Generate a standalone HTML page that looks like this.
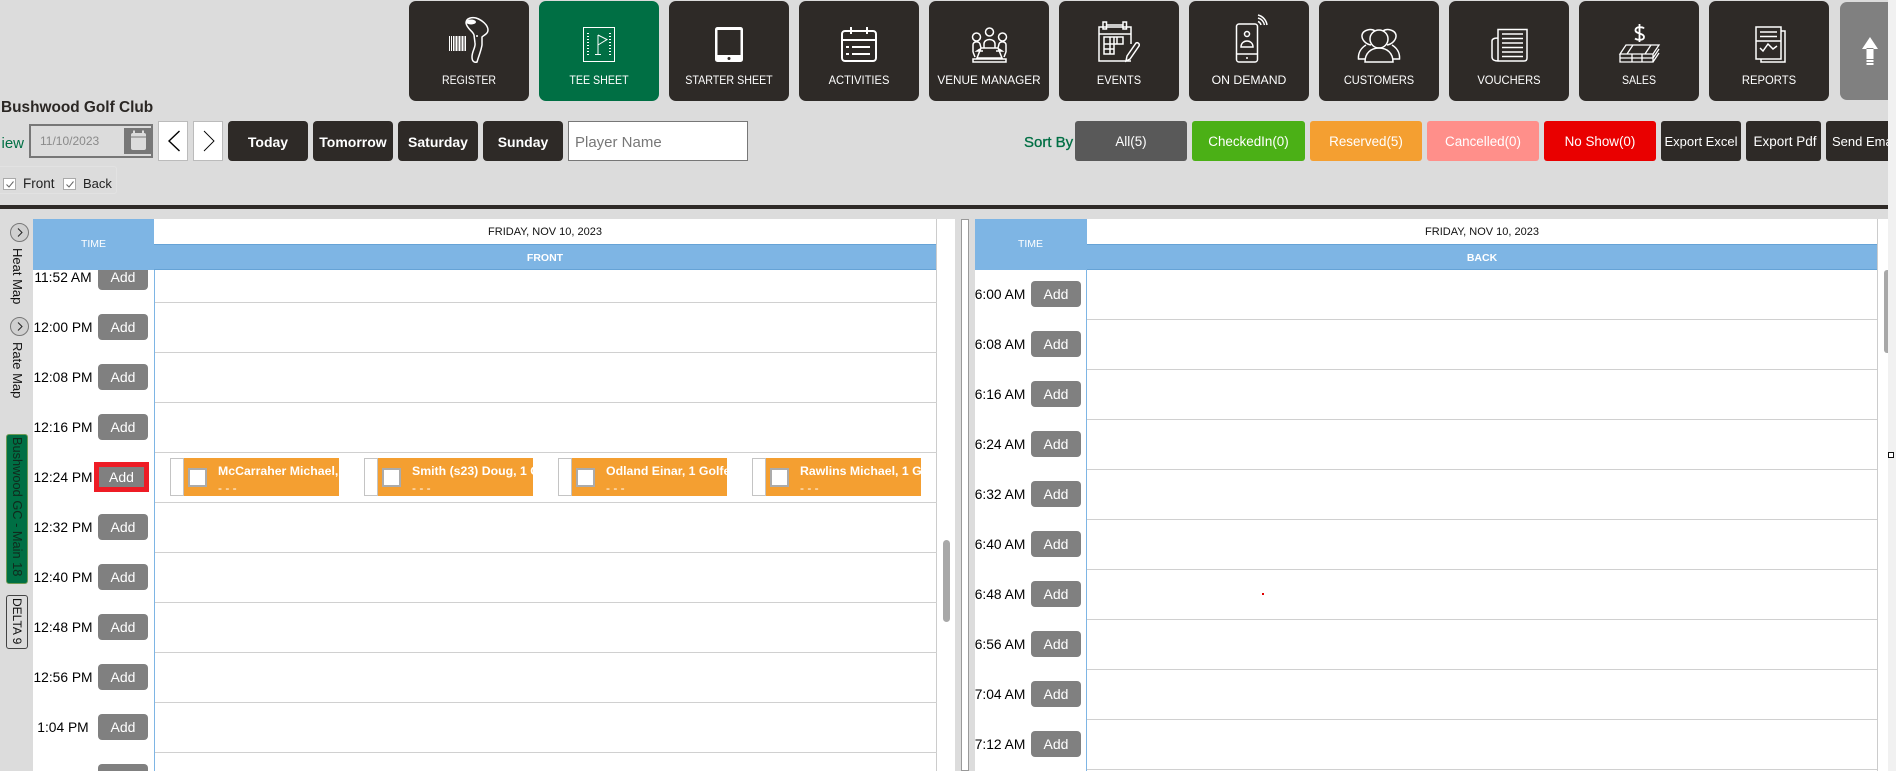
<!DOCTYPE html>
<html><head><meta charset="utf-8"><title>Tee Sheet</title>
<style>
html,body{margin:0;padding:0;width:1896px;height:771px;overflow:hidden;background:#dcdcdc;font-family:"Liberation Sans",sans-serif}
#p{position:absolute;left:0;top:0;width:1896px;height:771px;overflow:hidden}
#p div,#p span,#p svg{position:absolute;box-sizing:border-box}
.nb{top:1px;width:120px;height:100px;background:#2e2a27;border-radius:7px;color:#fff}
.nb svg{left:0;top:0;width:120px;height:100px;fill:none;stroke:#fff;stroke-width:1.5}
.nb span{left:0;width:120px;top:72px;text-align:center;font-size:12px;line-height:15px;white-space:nowrap}
.b{background:#2e2a27;color:#fff;border-radius:4px;top:121px;height:40px;text-align:center;line-height:42px;font-weight:bold;font-size:14px;white-space:nowrap}
.s{top:121px;height:40px;border-radius:3px;color:#fff;text-align:center;line-height:41px;font-size:13.4px;white-space:nowrap;overflow:hidden}
.a{left:98px;width:50px;height:26px;background:#808080;border-radius:4px;color:#fff;font-size:14px;line-height:26px;text-align:center}
.ar{left:1031px}
.t{left:33px;width:60px;text-align:center;font-size:13.8px;line-height:20px;color:#000;white-space:nowrap}
.tr{left:970px;width:60px}
.l{left:155px;width:782px;height:1px;background:#d0d0d0}
.lr{left:1087px;width:790px}
.ap{top:458px;height:38px}
.w{left:0;top:0;width:14px;height:38px;background:#fff;border:1px solid #c4c4c4}
.o{left:14px;top:0;width:155px;height:38px;background:#f49f31;overflow:hidden;color:#fff}
.c{left:4px;top:10px;width:19px;height:19px;background:#fff;border:2px solid #ababab}
.n{left:34px;top:5px;font-size:12.3px;font-weight:bold;line-height:16px;white-space:nowrap}
.d{left:34px;top:23px;font-size:12px;line-height:15px;white-space:nowrap}
.v{writing-mode:vertical-rl;font-size:13px;white-space:nowrap;color:#111}
.bl{background:#7eb5e4;color:#fff;font-size:10.5px;text-align:center}
.dt{font-size:11px;color:#111;text-align:center;line-height:27px;background:#fff}
</style></head><body><div id="p">

<!-- NAV -->
<div class="nb" style="left:409px"><svg viewBox="0 0 120 100"><path d="M57 22C57 17 63 16 67 17C73 19 79 24 79 29C79 33 75 34 73 36L73 44C72 50 70 54 68 61C65 62 63 60 63 56C63 50 67 46 66 42L65 34C64 30 58 28 57 22Z"/><ellipse cx="62" cy="21" rx="5" ry="2.5" fill="#fff" stroke="none"/><circle cx="68" cy="35" r="1" fill="#fff" stroke="none"/><path stroke-width="1" d="M40.5 35V50M42.5 35V50M44.5 35V50M46 35V50M47.5 35V50M49 35V50M50.5 35V50M52 35V50M53.5 35V50M55 35V50M56.5 35V50"/></svg><span style="transform:scaleX(.88)">REGISTER</span></div>
<div class="nb" style="left:539px;background:#006f44"><svg viewBox="0 0 120 100"><rect x="44.5" y="26.5" width="31" height="34" stroke-width="1"/><path stroke-width="2" stroke-dasharray="1 2" d="M49 32V56M71 32V56"/><path stroke-width="1" d="M59 34V53M56 53.500H62M59 34L68 38.500L59 44"/></svg><span style="transform:scaleX(.89)">TEE SHEET</span></div>
<div class="nb" style="left:669px"><svg viewBox="0 0 120 100"><rect x="46" y="26" width="28" height="35" rx="2.5" fill="#fff" stroke="none"/><rect x="48.5" y="29" width="23" height="25" fill="#2e2a27" stroke="none"/><circle cx="60" cy="57.5" r="1.5" fill="#2e2a27" stroke="none"/></svg><span style="transform:scaleX(.89)">STARTER SHEET</span></div>
<div class="nb" style="left:799px"><svg viewBox="0 0 120 100"><rect x="43" y="30" width="34" height="30" rx="3" stroke-width="2"/><path stroke-width="2" d="M43 39H77M52 26V33M68 26V33M53 46H71M53 53H71M47 46H50M47 53H50"/></svg><span style="transform:scaleX(.93)">ACTIVITIES</span></div>
<div class="nb" style="left:929px"><svg viewBox="0 0 120 100" stroke-width="1.2"><circle cx="60.5" cy="31" r="4"/><circle cx="47.5" cy="36" r="4"/><circle cx="73.5" cy="36" r="4"/><path d="M55 43C55 37 66 37 66 43V47H55ZM44 51V44C44 40 50 40 51 43L52 47M77 51V44C77 40 71 40 70 43L69 47M51 48L48 50H54M70 48L73 50H67M52 47H69L73 57H48ZM44 51L46 56M77 51L75 56"/><path stroke-width="1.5" d="M44 61V58H77V61ZM44 61H77"/></svg><span style="transform:scaleX(.98)">VENUE MANAGER</span></div>
<div class="nb" style="left:1059px"><svg viewBox="0 0 120 100" stroke-width="1.3"><path d="M72 60H40V26H72V43M40 33H72"/><rect x="44" y="21" width="3.5" height="7"/><rect x="64" y="21" width="3.5" height="7"/><path d="M47.5 24H64M45 36H64V43H45ZM45 43V53H55V36M51 36V53M45 48H55M58 36V43"/><path d="M68 55L77 42C79 41 81 43 80 45L71 58L67 60Z"/></svg><span style="transform:scaleX(.92)">EVENTS</span></div>
<div class="nb" style="left:1189px"><svg viewBox="0 0 120 100" stroke-width="1.3"><rect x="47.5" y="23" width="21" height="38" rx="2.5"/><path d="M47.5 53H68.500"/><circle cx="58" cy="33" r="2.5"/><path d="M52 46C52 38 64 38 64 46Z" stroke-width="1.5"/><circle cx="58" cy="57" r="1" fill="#fff" stroke="none"/><path d="M69 20.500A5 5 0 0 1 72 24M69 17A9 9 0 0 1 75.500 24M69 14A12 12 0 0 1 78 24"/></svg><span style="transform:scaleX(1.02)">ON DEMAND</span></div>
<div class="nb" style="left:1319px"><svg viewBox="0 0 120 100" stroke-width="1.8"><circle cx="60" cy="38" r="9"/><path d="M52 44C46 43 42.500 38 43 34C44 29 52 27 56 30M68 44C74 43 77.500 38 77 34C76 29 68 27 64 30"/><path d="M46 61C46 52 52 47 60 47C68 47 74 52 74 61Z"/><path d="M46 58H39.500C39 52 42 47 47 44M74 58H80.500C81 52 78 47 73 44"/></svg><span style="transform:scaleX(.92)">CUSTOMERS</span></div>
<div class="nb" style="left:1449px"><svg viewBox="0 0 120 100" stroke-width="1.3"><path d="M49 60H75C77 60 78 59 78 57V28.500H49V60C46 60 43 59 43 56V40C43 38 45 37 49 37"/><path d="M53 33H74M53 37.500H74M53 42H74M53 46.500H74M53 51H74M53 55.500H74"/></svg><span style="transform:scaleX(.93)">VOUCHERS</span></div>
<div class="nb" style="left:1579px"><svg viewBox="0 0 120 100" stroke-width="1.5"><path stroke-width="1.8" d="M65 27.500C64 26 57 25 56.500 29C56 33 65 32 65 36C65 40 58 39 56 37.500M60.500 23V41"/><path stroke-width="1.3" d="M47 44H80L74 53H41ZM54 44L48 53M72 44L66 53M41 53V61H74V53M41 57H74M53 53V61M63 53V61M74 57L80 48M74 61L80 52"/></svg><span style="transform:scaleX(.88)">SALES</span></div>
<div class="nb" style="left:1709px"><svg viewBox="0 0 120 100" stroke-width="1.4"><path d="M72 30H76V61H52V58"/><rect x="47" y="26" width="25" height="32"/><path d="M51 31H68M51 35.500H68M47 40H72M51 47L54 50L59 43L64 48L68 45" /></svg><span style="transform:scaleX(.94)">REPORTS</span></div>
<div style="left:1840px;top:2px;width:48px;height:98px;background:#808080;border-radius:7px 0 0 7px"><svg style="left:0;top:0" width="48" height="98" viewBox="0 0 48 98"><path fill="#fff" d="M30 35L22 47H38ZM26.500 46H33.500V57H26.500ZM26.500 58H33.500V60H26.500ZM26.500 61H33.500V63H26.500Z"/></svg></div>

<!-- TOOLBAR -->
<div style="left:1px;top:98px;font-size:15.4px;font-weight:bold;color:#2b2724;line-height:20px;white-space:nowrap">Bushwood Golf Club</div>
<div style="left:0;top:134px;width:24px;height:20px;overflow:hidden;font-size:15px;color:#006f44;line-height:20px"><span style="right:0;top:0;white-space:nowrap">iew</span></div>
<div style="left:29px;top:124px;width:124px;height:34px;background:#dcdcdc;border:2px solid #777"></div>
<div style="left:40px;top:133px;font-size:12px;color:#8a8a8a;line-height:16px">11/10/2023</div>
<div style="left:124px;top:128px;width:29px;height:26px;background:#777"><svg style="left:0;top:0" width="29" height="26" viewBox="0 0 29 26"><rect x="7" y="5" width="15" height="17" rx="2" fill="#dcdcdc"/><path d="M10 2.500V7M19 2.500V7" stroke="#dcdcdc" stroke-width="2"/><path d="M7 9H22" stroke="#777" stroke-width="1"/></svg></div>
<div style="left:158px;top:121px;width:30px;height:40px;background:#fff;border:1px solid #bbb"><svg style="left:-1px;top:-1px" width="30" height="40"><path d="M21.500 10L11 20L21.500 30" fill="none" stroke="#000" stroke-width="1.400"/></svg></div>
<div style="left:193px;top:121px;width:30px;height:40px;background:#fff;border:1px solid #bbb"><svg style="left:-1px;top:-1px" width="30" height="40"><path d="M11 10L21 20L11 30" fill="none" stroke="#000" stroke-width="0.900"/></svg></div>
<div class="b" style="left:228px;width:80px">Today</div>
<div class="b" style="left:313px;width:80px">Tomorrow</div>
<div class="b" style="left:398px;width:80px">Saturday</div>
<div class="b" style="left:483px;width:80px">Sunday</div>
<div style="left:568px;top:121px;width:180px;height:40px;background:#fff;border:1.5px solid #777;color:#777;font-size:15px;line-height:41px;padding-left:6px">Player Name</div>

<div style="left:1024px;top:133px;font-size:15px;font-weight:normal;color:#006f44;line-height:20px;white-space:nowrap;-webkit-text-stroke:.3px #006f44">Sort By</div>
<div class="s" style="left:1075px;width:112px;background:#595959">All(5)</div>
<div class="s" style="left:1192px;width:113px;background:#4bb016">CheckedIn(0)</div>
<div class="s" style="left:1310px;width:112px;background:#f49f31">Reserved(5)</div>
<div class="s" style="left:1427px;width:112px;background:#ff8f8a">Cancelled(0)</div>
<div class="s" style="left:1544px;width:112px;background:#e90000">No Show(0)</div>
<div class="s" style="left:1661px;width:80px;background:#2e2a27;font-size:13px;line-height:42px">Export Excel</div>
<div class="s" style="left:1746px;width:75px;background:#2e2a27;font-size:13.5px;line-height:42px;padding-left:3px">Export Pdf</div>
<div class="s" style="left:1826px;width:62px;background:#2e2a27;font-size:13px;line-height:42px;text-align:left;padding-left:6px;border-radius:3px 0 0 3px">Send Email</div>

<div style="left:-2px;top:166px;width:119px;height:28px;border:1px solid #e2e2e2;border-radius:3px"></div>
<div style="left:3px;top:178px;width:13px;height:12px;background:#fff;border:1px solid #aaa"><svg style="left:1px;top:1px" width="10" height="9"><path d="M1.500 4.500L4 7L8.500 1.500" fill="none" stroke="#666" stroke-width="1"/></svg></div>
<div style="left:23px;top:175px;font-size:13.5px;line-height:18px;color:#222">Front</div>
<div style="left:63px;top:178px;width:13px;height:12px;background:#fff;border:1px solid #aaa"><svg style="left:1px;top:1px" width="10" height="9"><path d="M1.500 4.500L4 7L8.500 1.500" fill="none" stroke="#666" stroke-width="1"/></svg></div>
<div style="left:83px;top:175px;font-size:13px;line-height:18px;color:#222">Back</div>
<div style="left:0;top:205px;width:1888px;height:4px;background:#2e2a27"></div>

<!-- PAGE SCROLL -->
<div style="left:1888px;top:0;width:8px;height:771px;background:#f1f1f1"></div>
<div style="left:1888px;top:452px;width:6px;height:6px;background:#fff;border:1px solid #111"></div>

<!-- SIDEBAR -->
<div style="left:10px;top:223px;width:19px;height:19px;border-radius:50%;background:#d0d0d0;border:1px solid #777"><svg style="left:0;top:0" width="17" height="17"><path d="M7 4.500L11 8.500L7 12.500" fill="none" stroke="#222" stroke-width="1"/></svg></div>
<div class="v" style="left:9px;top:248px;line-height:16px">Heat Map</div>
<div style="left:10px;top:317px;width:19px;height:19px;border-radius:50%;background:#d0d0d0;border:1px solid #777"><svg style="left:0;top:0" width="17" height="17"><path d="M7 4.500L11 8.500L7 12.500" fill="none" stroke="#222" stroke-width="1"/></svg></div>
<div class="v" style="left:9px;top:342px;line-height:16px">Rate Map</div>
<div class="v" style="left:6px;top:434px;width:22px;height:150px;background:#006f44;border:1px solid #6f9a55;border-radius:3px;line-height:20px;padding-top:2px;font-size:12.8px;color:#102a1d;overflow:hidden">Bushwood GC - Main 18</div>
<div class="v" style="left:6px;top:595px;width:22px;height:54px;background:#dcdcdc;border:1px solid #444;border-radius:3px;line-height:20px;padding-top:2px;font-size:12px;overflow:hidden">DELTA 9</div>

<!-- LEFT PANE -->
<div style="left:33px;top:219px;width:922px;height:552px;background:#fff"></div>
<div style="left:936px;top:219px;width:1px;height:552px;background:#ccc"></div>
<div style="left:154px;top:219px;width:1px;height:552px;background:#7eb5e4"></div>
<div class="l" style="top:302px"></div><div class="l" style="top:352px"></div><div class="l" style="top:402px"></div><div class="l" style="top:452px"></div><div class="l" style="top:502px"></div><div class="l" style="top:552px"></div><div class="l" style="top:602px"></div><div class="l" style="top:652px"></div><div class="l" style="top:702px"></div><div class="l" style="top:752px"></div>

<div class="t" style="top:268px">11:52 AM</div><div class="a" style="top:264px">Add</div>
<div class="t" style="top:318px">12:00 PM</div><div class="a" style="top:314px">Add</div>
<div class="t" style="top:368px">12:08 PM</div><div class="a" style="top:364px">Add</div>
<div class="t" style="top:418px">12:16 PM</div><div class="a" style="top:414px">Add</div>
<div class="t" style="top:468px">12:24 PM</div><div class="a" style="left:94px;top:462px;width:55px;height:30px;border:5px solid #ee1c25;border-radius:0;line-height:20px">Add</div>
<div class="t" style="top:518px">12:32 PM</div><div class="a" style="top:514px">Add</div>
<div class="t" style="top:568px">12:40 PM</div><div class="a" style="top:564px">Add</div>
<div class="t" style="top:618px">12:48 PM</div><div class="a" style="top:614px">Add</div>
<div class="t" style="top:668px">12:56 PM</div><div class="a" style="top:664px">Add</div>
<div class="t" style="top:718px">1:04 PM</div><div class="a" style="top:714px">Add</div>
<div class="a" style="top:764px"></div>

<div class="ap" style="left:170px;width:169px"><div class="w"></div><div class="o"><div class="c"></div><div class="n">McCarraher Michael, 1 Golfer</div><div class="d">- - -</div></div></div>
<div class="ap" style="left:364px;width:169px"><div class="w"></div><div class="o"><div class="c"></div><div class="n">Smith (s23) Doug, 1 Golfer</div><div class="d">- - -</div></div></div>
<div class="ap" style="left:558px;width:169px"><div class="w"></div><div class="o"><div class="c"></div><div class="n">Odland Einar, 1 Golfer</div><div class="d">- - -</div></div></div>
<div class="ap" style="left:752px;width:169px"><div class="w"></div><div class="o"><div class="c"></div><div class="n">Rawlins Michael, 1 Golfer</div><div class="d">- - -</div></div></div>

<div class="bl" style="left:33px;top:219px;width:121px;height:51px;line-height:50px">TIME</div>
<div class="dt" style="left:154px;top:219px;width:782px;height:25px">FRIDAY, NOV 10, 2023</div>
<div class="bl" style="left:154px;top:244px;width:782px;height:26px;line-height:26px;font-weight:bold;border-top:1px solid #66a3d6;border-bottom:1px solid #66a3d6">FRONT</div>
<div style="left:943px;top:540px;width:7px;height:82px;background:#a8a8a8;border-radius:4px"></div>

<!-- SPLITTER -->
<div style="left:961px;top:219px;width:8px;height:552px;background:#fff;border:1px solid #999"></div>

<!-- RIGHT PANE -->
<div style="left:975px;top:219px;width:913px;height:552px;background:#fff"></div>
<div style="left:1877px;top:219px;width:1px;height:552px;background:#ccc"></div>
<div style="left:1086px;top:219px;width:1px;height:552px;background:#7eb5e4"></div>
<div class="l lr" style="top:319px"></div><div class="l lr" style="top:369px"></div><div class="l lr" style="top:419px"></div><div class="l lr" style="top:469px"></div><div class="l lr" style="top:519px"></div><div class="l lr" style="top:569px"></div><div class="l lr" style="top:619px"></div><div class="l lr" style="top:669px"></div><div class="l lr" style="top:719px"></div><div class="l lr" style="top:769px"></div>

<div class="t tr" style="top:285px">6:00 AM</div><div class="a ar" style="top:281px">Add</div>
<div class="t tr" style="top:335px">6:08 AM</div><div class="a ar" style="top:331px">Add</div>
<div class="t tr" style="top:385px">6:16 AM</div><div class="a ar" style="top:381px">Add</div>
<div class="t tr" style="top:435px">6:24 AM</div><div class="a ar" style="top:431px">Add</div>
<div class="t tr" style="top:485px">6:32 AM</div><div class="a ar" style="top:481px">Add</div>
<div class="t tr" style="top:535px">6:40 AM</div><div class="a ar" style="top:531px">Add</div>
<div class="t tr" style="top:585px">6:48 AM</div><div class="a ar" style="top:581px">Add</div>
<div class="t tr" style="top:635px">6:56 AM</div><div class="a ar" style="top:631px">Add</div>
<div class="t tr" style="top:685px">7:04 AM</div><div class="a ar" style="top:681px">Add</div>
<div class="t tr" style="top:735px">7:12 AM</div><div class="a ar" style="top:731px">Add</div>

<div class="bl" style="left:975px;top:219px;width:111px;height:51px;line-height:50px">TIME</div>
<div class="dt" style="left:1087px;top:219px;width:790px;height:25px">FRIDAY, NOV 10, 2023</div>
<div class="bl" style="left:1087px;top:244px;width:790px;height:26px;line-height:26px;font-weight:bold;border-top:1px solid #66a3d6;border-bottom:1px solid #66a3d6">BACK</div>
<div style="left:1884px;top:270px;width:4px;height:83px;background:#a8a8a8;border-radius:3px 0 0 3px"></div>
<div style="left:1262px;top:593px;width:2px;height:2px;background:#e00000"></div>

<!-- gray gutter -->
<div style="left:955px;top:219px;width:6px;height:552px;background:#dcdcdc"></div>
<div style="left:969px;top:219px;width:6px;height:552px;background:#dcdcdc"></div>
</div></body></html>
